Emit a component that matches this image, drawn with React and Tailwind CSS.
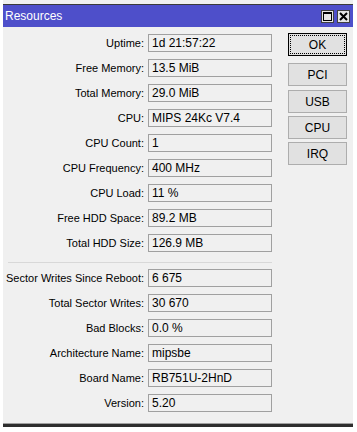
import React from "react";

const upper = [
  ["Uptime:", "1d 21:57:22"],
  ["Free Memory:", "13.5 MiB"],
  ["Total Memory:", "29.0 MiB"],
  ["CPU:", "MIPS 24Kc V7.4"],
  ["CPU Count:", "1"],
  ["CPU Frequency:", "400 MHz"],
  ["CPU Load:", "11 %"],
  ["Free HDD Space:", "89.2 MB"],
  ["Total HDD Size:", "126.9 MB"],
];
const lower = [
  ["Sector Writes Since Reboot:", "6 675"],
  ["Total Sector Writes:", "30 670"],
  ["Bad Blocks:", "0.0 %"],
  ["Architecture Name:", "mipsbe"],
  ["Board Name:", "RB751U-2HnD"],
  ["Version:", "5.20"],
];

function Row({ label, value }) {
  return (
    <div className="flex items-center h-[18px]">
      <div className="w-[145px] text-right pr-[4px] leading-none text-[11px] whitespace-nowrap">{label}</div>
      <div className="w-[124px] h-[18px] border border-[#a0a0a0] flex items-center pl-[3px] leading-none text-[12px] whitespace-nowrap">
        {value}
      </div>
    </div>
  );
}

function Btn({ children, className = "" }) {
  return (
    <div
      className={
        "w-[59px] h-[23px] bg-[#e1e1e1] border border-[#adadad] flex items-center justify-center leading-none " +
        className
      }
    >
      {children}
    </div>
  );
}

export default function App() {
  return (
    <div
      className="w-[357px] h-[432px] bg-white text-black text-[12px]"
      style={{ fontFamily: '"Liberation Sans", Arial, sans-serif' }}
    >
      <div className="ml-[3px] w-[350px]">
        <div className="h-[4px] bg-[#f0f0f0]" />
        <div className="h-[1px] bg-[#3a3a3a]" />
        <div className="h-[22px] bg-[#4e4fca] flex items-center justify-between pl-[2px] pr-[3px]">
          <span className="text-white text-[12px] leading-none">Resources</span>
          <div className="flex gap-[3px]">
            <div className="w-[13px] h-[13px] bg-[#e6e6e6] border border-[#404040] flex items-center justify-center">
              <svg width="9" height="9" viewBox="0 0 9 9">
                <rect x="0.5" y="0.5" width="8" height="8" fill="none" stroke="#000" />
                <rect x="0" y="0" width="9" height="2" fill="#000" />
              </svg>
            </div>
            <div className="w-[13px] h-[13px] bg-[#e6e6e6] border border-[#404040] flex items-center justify-center">
              <svg width="9" height="9" viewBox="0 0 9 9">
                <path d="M1 1 L8 8 M8 1 L1 8" stroke="#000" strokeWidth="2" />
              </svg>
            </div>
          </div>
        </div>
        <div className="h-[396px] bg-[#f0f0f0] flex pt-[6px]">
          <div className="w-[269px] flex flex-col">
            <div className="flex flex-col gap-[7px] pt-[1px]">
              {upper.map(([l, v]) => (
                <Row key={l} label={l} value={v} />
              ))}
            </div>
            <div className="ml-[5px] w-[264px] h-[1px] bg-[#d8d8d8] mt-[10px] mb-[6px]" />
            <div className="flex flex-col gap-[7px]">
              {lower.map(([l, v]) => (
                <Row key={l} label={l} value={v} />
              ))}
            </div>
          </div>
          <div className="ml-[16px] flex flex-col">
            <div className="w-[59px] h-[23px] bg-[#e1e1e1] border border-black relative flex items-center justify-center leading-none">
              <div className="absolute inset-[1px] border border-dotted border-black" />
              OK
            </div>
            <Btn className="mt-[7px]">PCI</Btn>
            <Btn className="mt-[4px]">USB</Btn>
            <Btn className="mt-[3px]">CPU</Btn>
            <Btn className="mt-[3px]">IRQ</Btn>
          </div>
        </div>
        <div className="h-[1px] bg-[#a0a0a0]" />
        <div className="h-[3px] bg-[#2e2e2e]" />
      </div>
    </div>
  );
}
